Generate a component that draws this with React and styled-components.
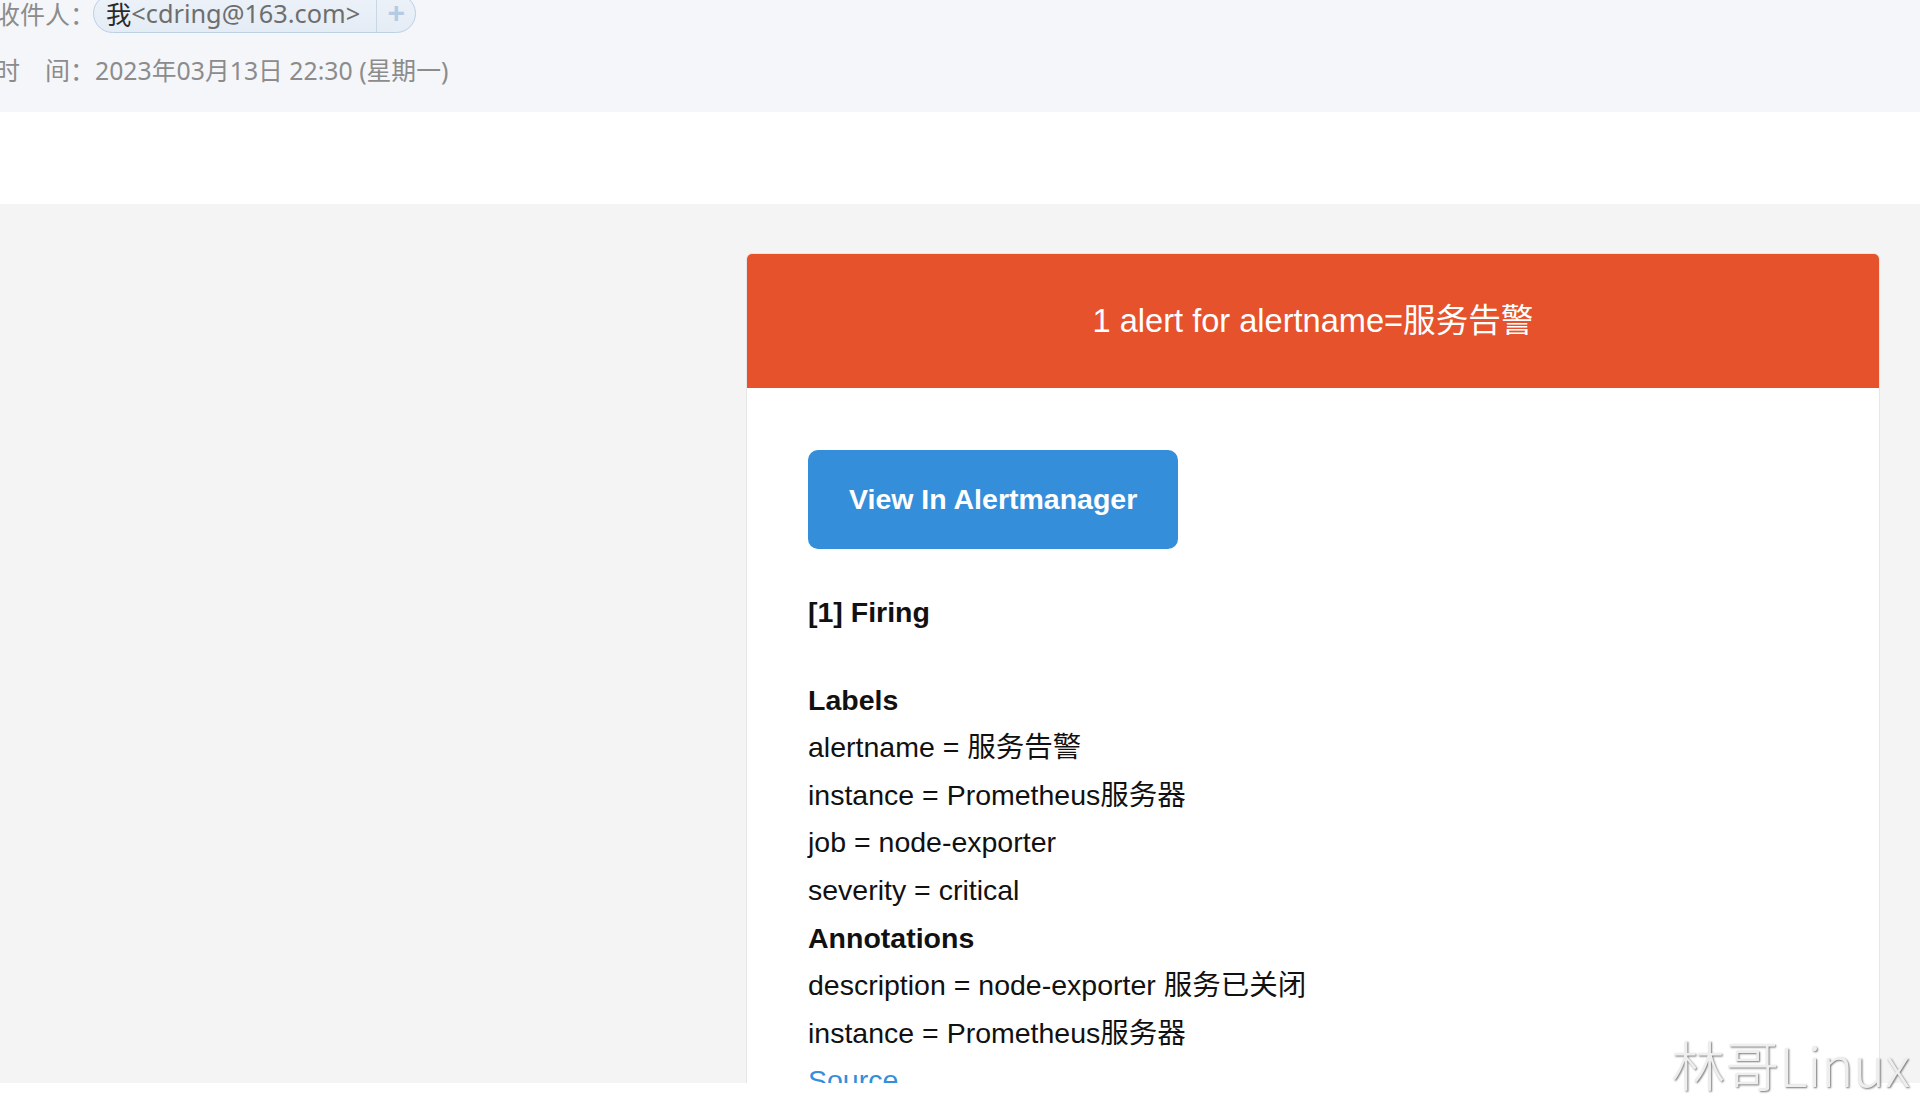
import React from "react";
import styled, { createGlobalStyle } from "styled-components";

const GlobalStyle = createGlobalStyle`
  html, body {
    margin: 0;
    padding: 0;
    background: #ffffff;
  }
  * {
    box-sizing: border-box;
  }
`;

const labels = [
  { name: "alertname", value: "服务告警" },
  { name: "instance", value: "Prometheus服务器" },
  { name: "job", value: "node-exporter" },
  { name: "severity", value: "critical" },
];

const annotations = [
  { name: "description", value: "node-exporter 服务已关闭" },
  { name: "instance", value: "Prometheus服务器" },
];

const App = () => {
  return (
    <Page>
      <GlobalStyle />
      <MailHeader>
        <MetaRow>
          <MetaLabel>收件人：</MetaLabel>
          <Recipient>
            <RecipientName>
              <Me>我</Me>&lt;cdring@163.com&gt;
            </RecipientName>
            <AddButton>+</AddButton>
          </Recipient>
        </MetaRow>
        <MetaRow>
          <MetaLabel>时　间：</MetaLabel>
          <MetaValue>2023年03月13日 22:30 (星期一)</MetaValue>
        </MetaRow>
      </MailHeader>

      <MailBody>
        <EmailFrame>
          <AlertCard>
            <AlertTitle>1 alert for alertname=服务告警</AlertTitle>
            <CardContent>
              <Block>
                <PrimaryButton href="#">View In Alertmanager</PrimaryButton>
              </Block>
              <Block>
                <strong>[1] Firing</strong>
              </Block>
              <Block>
                <strong>Labels</strong>
                <br />
                {labels.map((l) => (
                  <React.Fragment key={l.name}>
                    {l.name} = {l.value}
                    <br />
                  </React.Fragment>
                ))}
                <strong>Annotations</strong>
                <br />
                {annotations.map((a) => (
                  <React.Fragment key={a.name}>
                    {a.name} = {a.value}
                    <br />
                  </React.Fragment>
                ))}
                <SourceLink href="#">Source</SourceLink>
                <br />
              </Block>
            </CardContent>
          </AlertCard>
        </EmailFrame>
      </MailBody>

      <Watermark>林哥Linux</Watermark>
    </Page>
  );
};

const Page = styled.div`
  position: relative;
  width: 1920px;
  height: 1099px;
  overflow: hidden;
  background: #ffffff;
`;

const MailHeader = styled.div`
  display: flex;
  flex-direction: column;
  gap: 18px;
  height: 112px;
  margin-left: -5px;
  background: #f5f6fa;
  font-family: "Noto Sans", "Noto Sans CJK SC", sans-serif;
  font-size: 25px;
  color: #8a8a8a;
`;

const MetaRow = styled.div`
  display: flex;
  align-items: center;
  height: 38px;
  &:first-child {
    margin-top: -6px;
  }
`;

const MetaLabel = styled.span`
  width: 100px;
  flex-shrink: 0;
  white-space: pre;
  color: #8c8c8c;
  font-family: "Noto Sans CJK SC", sans-serif;
`;

const MetaValue = styled.span`
  color: #8c8c8c;
  font-size: 24.8px;
`;

const Recipient = styled.div`
  display: flex;
  align-items: stretch;
  height: 39px;
  margin-left: -2px;
  border: 1px solid #bcd0e4;
  border-radius: 20px;
  background: linear-gradient(#edf2f9, #e4ecf5);
  overflow: hidden;
`;

const RecipientName = styled.span`
  display: flex;
  align-items: center;
  padding: 0 16px 0 12px;
  color: #6e6e6e;
  font-size: 25.3px;
`;

const Me = styled.span`
  color: #2b2b2b;
  font-family: "Noto Sans CJK SC", sans-serif;
`;

const AddButton = styled.span`
  display: flex;
  align-items: center;
  justify-content: center;
  width: 39px;
  border-left: 1px solid #c6d7e8;
  color: #b4cbe3;
  font-family: "Liberation Sans", sans-serif;
  font-size: 30px;
  font-weight: bold;
`;

const MailBody = styled.div`
  padding-top: 92px;
  background: #ffffff;
`;

const EmailFrame = styled.div`
  height: 879px;
  overflow: hidden;
  padding: 49px 40px 0 746px;
  background: #f4f4f4;
`;

const AlertCard = styled.div`
  width: 1134px;
  background: #ffffff;
  border: 1px solid #e6e6e6;
  border-radius: 6px;
  overflow: hidden;
`;

const AlertTitle = styled.div`
  padding: 40px;
  background: #e6522c;
  color: #ffffff;
  font-family: "Liberation Sans", "Noto Sans CJK SC", sans-serif;
  font-size: 32.6px;
  line-height: 54px;
  text-align: center;
`;

const CardContent = styled.div`
  padding: 62px 61px 0 61px;
  font-family: "Liberation Sans", "Noto Sans CJK SC", sans-serif;
  font-size: 28.5px;
  line-height: 47.6px;
  color: #111111;
`;

const Block = styled.div`
  padding-bottom: 40px;
  &:first-child {
    line-height: 0;
  }
`;

const PrimaryButton = styled.a`
  display: inline-block;
  padding: 20px 41px;
  background: #348eda;
  border-radius: 10px;
  color: #ffffff;
  font-weight: bold;
  font-size: 28.5px;
  line-height: 59px;
  text-decoration: none;
`;

const SourceLink = styled.a`
  color: #348eda;
  text-decoration: underline;
`;

const Watermark = styled.div`
  position: absolute;
  right: 10px;
  bottom: 8px;
  font-family: "Noto Sans CJK SC", "Noto Sans", sans-serif;
  font-weight: 300;
  font-size: 54px;
  line-height: 1;
  color: #eeeeee;
  text-shadow: 1px 1px 2px rgba(0, 0, 0, 0.55);
  pointer-events: none;
`;

export default App;
